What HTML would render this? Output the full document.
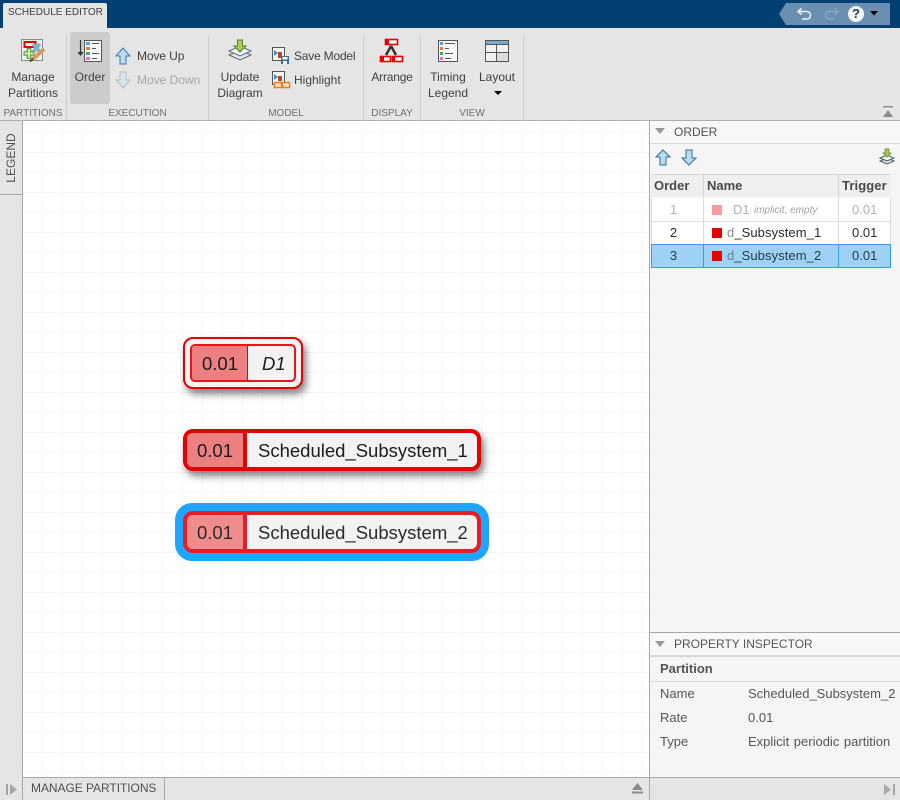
<!DOCTYPE html>
<html>
<head>
<meta charset="utf-8">
<style>
html,body{margin:0;padding:0;width:900px;height:800px;overflow:hidden;background:#fff;font-family:"Liberation Sans",sans-serif;}
.a{position:absolute;white-space:nowrap;}
.t{position:absolute;white-space:nowrap;font-size:12px;line-height:16px;color:#404040;}
.c{text-align:center;}
.g{position:absolute;white-space:nowrap;font-size:10px;line-height:14px;color:#6e6e6e;top:107px;text-align:center;}
.n{position:absolute;white-space:nowrap;font-size:18.5px;line-height:22px;color:#1c1c1c;}
.sep{position:absolute;top:36px;width:1px;height:84px;background:#cbcbcb;}
svg{position:absolute;overflow:visible;}
</style>
</head>
<body>
<!-- title bar -->
<div class="a" style="left:0;top:0;width:900px;height:28px;background:#023f73;"></div>
<div class="a" style="left:3px;top:3px;width:104px;height:25px;background:#e5e5e5;border-radius:2px 2px 0 0;"></div>
<div class="t" style="left:8px;top:5px;font-size:10px;color:#404040;">SCHEDULE EDITOR</div>
<svg style="left:779px;top:3px" width="111" height="22"><path d="M0 11L7 0H111V22H7Z" fill="#6a8fb0"/></svg>
<svg style="left:796px;top:7px" width="20" height="16" fill="none"><path d="M3 4.5H10.5C13 4.5 14.500 6 14.500 8.200C14.500 10.400 13 12 10.500 12H6" stroke="#e8f3fb" stroke-width="1.600"/><path d="M5.500 1.500L2 4.500L5.500 7.500" stroke="#e8f3fb" stroke-width="1.600"/></svg>
<svg style="left:821px;top:7px" width="20" height="16" fill="none"><path d="M16 4.500H8.500C6 4.500 4.500 6 4.500 8.200C4.500 10.400 6 12 8.500 12H13" stroke="#88a6c0" stroke-width="1.600"/><path d="M13.500 1.500L17 4.500L13.500 7.500" stroke="#88a6c0" stroke-width="1.600"/></svg>
<div class="a" style="left:848px;top:6px;width:16px;height:16px;border-radius:50%;background:#f4f6f8;color:#24384c;font:bold 13px/16px 'Liberation Sans',sans-serif;text-align:center;">?</div>
<svg style="left:870px;top:11px" width="9" height="5"><path d="M0 0H8L4 4.500Z" fill="#000"/></svg>

<!-- ribbon -->
<div class="a" style="left:0;top:28px;width:900px;height:92px;background:#e5e5e5;border-bottom:1px solid #aeaeae;"></div>
<div class="sep" style="left:66px"></div>
<div class="sep" style="left:208px"></div>
<div class="sep" style="left:363px"></div>
<div class="sep" style="left:420px"></div>
<div class="sep" style="left:523px"></div>

<div class="a" style="left:70px;top:32px;width:40px;height:72px;background:#cccccc;border-radius:3px;"></div>

<!-- manage partitions icon -->
<svg style="left:20px;top:38px" width="28" height="26" fill="none">
<rect x="1.500" y="1.500" width="21" height="21" fill="#efefef" stroke="#8a8a8a"/>
<rect x="4.500" y="4" width="11" height="5" fill="#fff" stroke="#e60000" stroke-width="2"/>
<path d="M13 6L20 14M20 6L13 14" stroke="#7fb2d6" stroke-width="3.500"/>
<path d="M9 10V21M3.500 15.500H14.500" stroke="#5c9e3c" stroke-width="4.500"/><path d="M9 11V20M4.500 15.500H13.500" stroke="#d7eeb8" stroke-width="2"/>
<path d="M13 21L24 11" stroke="#d49a5a" stroke-width="4"/><path d="M10 23.500L13 20.500" stroke="#444" stroke-width="2"/>
</svg>
<div class="t c" style="left:3px;top:69px;width:60px;">Manage<br>Partitions</div>

<!-- order icon -->
<svg style="left:76px;top:39px" width="28" height="26" fill="none">
<path d="M4.500 1V14" stroke="#333" stroke-width="1.200"/><path d="M1.500 13L4.500 17L7.500 13Z" fill="#333"/>
<rect x="8.500" y="1.500" width="17" height="21" fill="#f8f8f8" stroke="#555"/>
<rect x="10" y="3" width="4" height="3" fill="#4da6e0"/><rect x="10" y="8" width="4" height="3" fill="#e8803a"/><rect x="10" y="13" width="4" height="3" fill="#3cae5c"/><rect x="10" y="18" width="4" height="3" fill="#e070d0"/>
<path d="M16 4.500H23M16 9.500H20M16 14.500H23M16 19.500H21" stroke="#555"/>
</svg>
<div class="t c" style="left:70px;top:69px;width:40px;">Order</div>

<!-- move up / down -->
<svg style="left:115px;top:47px" width="16" height="18"><path d="M8 1L15 9H11V17H5V9H1Z" fill="#bcdcf2" stroke="#3e7ca8"/></svg>
<svg style="left:115px;top:71px" width="16" height="18"><path d="M8 17L15 9H11V1H5V9H1Z" fill="#d8e2ea" stroke="#b4c0c8"/></svg>
<div class="t" style="left:137px;top:48px;letter-spacing:-.1px;">Move Up</div>
<div class="t" style="left:137px;top:72px;color:#a6a6a6;">Move Down</div>

<!-- update diagram -->
<svg style="left:228px;top:40px" width="24" height="22" fill="none">
<path d="M12 10L23 15L12 20L1 15Z" fill="#dfe8ee" stroke="#5a6a74"/>
<path d="M12 6L23 11L12 16L1 11Z" fill="#f0f4f6" stroke="#5a6a74"/>
<path d="M9.500 0H14.500V6H18L12 12L6 6H9.500Z" fill="#a4cc54" stroke="#5c8020"/>
</svg>
<div class="t c" style="left:215px;top:69px;width:50px;">Update<br>Diagram</div>

<!-- save model / highlight -->
<svg style="left:272px;top:47px" width="18" height="18" fill="none">
<rect x=".5" y=".5" width="12" height="13" fill="#f6f6f6" stroke="#555"/><path d="M2 3V9L6 6Z" fill="#3f8fd0"/><rect x="6" y="5" width="4" height="6" fill="#c84028"/>
<rect x="9" y="9" width="8" height="8" fill="#3b6f96"/><rect x="10.500" y="10" width="5" height="2.500" fill="#fff"/><rect x="11" y="14" width="4" height="3" fill="#fff"/>
</svg>
<svg style="left:272px;top:71px" width="18" height="18" fill="none">
<rect x=".5" y=".5" width="12" height="13" fill="#f6f6f6" stroke="#555"/><path d="M2 3V9L6 6Z" fill="#3f8fd0"/><rect x="6" y="5" width="4" height="5" fill="#c84028"/>
<rect x="2.500" y="11.500" width="7" height="5" fill="#fbe0b8" stroke="#e08020" stroke-width="1.500"/><rect x="10.500" y="11.500" width="7" height="5" fill="#fbe0b8" stroke="#e08020" stroke-width="1.500"/>
</svg>
<div class="t" style="left:294px;top:48px;letter-spacing:-.2px;">Save Model</div>
<div class="t" style="left:294px;top:72px;">Highlight</div>

<!-- arrange -->
<svg style="left:379px;top:38px" width="26" height="26" fill="none">
<path d="M12 8L7 17M12 8L17 17" stroke="#333" stroke-width="2.500"/>
<rect x="6.500" y="1.500" width="12" height="5" fill="#fff" stroke="#e60000" stroke-width="1.600"/><rect x="6" y="1" width="4" height="6" fill="#e60000"/>
<rect x="1.500" y="18.500" width="10" height="5" fill="#fff" stroke="#e60000" stroke-width="1.600"/><rect x="1" y="18" width="4" height="6" fill="#e60000"/>
<rect x="13.500" y="18.500" width="10" height="5" fill="#fff" stroke="#e60000" stroke-width="1.600"/><rect x="13" y="18" width="3" height="6" fill="#e60000"/>
</svg>
<div class="t c" style="left:368px;top:69px;width:48px;letter-spacing:-.2px;">Arrange</div>

<!-- timing legend -->
<svg style="left:438px;top:40px" width="20" height="22" fill="none">
<rect x=".5" y=".5" width="19" height="21" fill="#f8f8f8" stroke="#555"/>
<rect x="2" y="2" width="3" height="3" fill="#4da6e0"/><rect x="2" y="7" width="3" height="3" fill="#e8803a"/><rect x="2" y="12" width="3" height="3" fill="#3cae5c"/><rect x="2" y="17" width="3" height="3" fill="#e070d0"/>
<path d="M7 3.500H17M7 8.500H11M7 13.500H15M7 18.500H13" stroke="#555"/>
</svg>
<div class="t c" style="left:422px;top:69px;width:52px;">Timing<br>Legend</div>

<!-- layout -->
<svg style="left:485px;top:40px" width="24" height="22" fill="none">
<rect x=".5" y=".5" width="23" height="21" fill="#f0f0f0" stroke="#555"/>
<rect x="1" y="1" width="22" height="3" fill="#78a8cc"/>
<path d="M0 4.500H24M11.500 4V22M0 12.500H24" stroke="#555"/>
<rect x="12" y="13" width="11" height="8" fill="#dcdcdc"/>
</svg>
<div class="t c" style="left:472px;top:69px;width:50px;">Layout</div>
<svg style="left:494px;top:91px" width="8" height="4"><path d="M0 0H8L4 4Z" fill="#000"/></svg>

<div class="g" style="left:0;width:66px;">PARTITIONS</div>
<div class="g" style="left:67px;width:141px;">EXECUTION</div>
<div class="g" style="left:209px;width:154px;">MODEL</div>
<div class="g" style="left:364px;width:56px;">DISPLAY</div>
<div class="g" style="left:421px;width:102px;">VIEW</div>
<svg style="left:883px;top:106px" width="11" height="11"><rect width="10" height="1.500" fill="#8c8c8c"/><path d="M0 11L5 4L10 11Z" fill="#8c8c8c"/></svg>

<!-- left rail -->
<div class="a" style="left:0;top:121px;width:22px;height:679px;background:#e5e5e5;border-right:1px solid #a8a8a8;"></div>
<div class="a" style="left:0;top:194px;width:22px;height:1px;background:#a8a8a8;"></div>
<div class="a" style="left:-19px;top:150px;width:60px;height:16px;text-align:center;font-size:12px;line-height:16px;color:#505050;transform:rotate(-90deg);">LEGEND</div>

<!-- canvas grid -->
<div class="a" style="left:23px;top:121px;width:626px;height:656px;background-color:#fff;background-image:linear-gradient(to right,#f6f6f6 1px,transparent 1px),linear-gradient(to bottom,#f6f6f6 1px,transparent 1px);background-size:20px 20px;background-position:19px 11px;"></div>

<!-- D1 node -->
<div class="a" style="left:183px;top:337px;width:120px;height:52px;box-sizing:border-box;background:#f2f2f2;border:2px solid #e60000;border-radius:10px;box-shadow:3px 5px 8px rgba(0,0,0,.5);"></div>
<div class="a" style="left:190px;top:344px;width:106px;height:38px;box-sizing:border-box;background:#f2f2f2;border:2px solid #e8141c;border-radius:5px;overflow:hidden;">
  <div class="a" style="left:0;top:0;width:55px;height:34px;background:#ec8080;border-right:1.500px solid #e60000;"></div>
</div>
<div class="n" style="left:202px;top:353px;">0.01</div>
<div class="n" style="left:262px;top:353px;font-style:italic;">D1</div>

<!-- Sub1 node -->
<div class="a" style="left:183px;top:429px;width:298px;height:42px;box-sizing:border-box;background:#f2f2f2;border:4px solid #e60000;border-radius:10px;box-shadow:3px 5px 8px rgba(0,0,0,.5);overflow:hidden;">
  <div class="a" style="left:0;top:0;width:56px;height:34px;background:#ec8080;border-right:4px solid #e60000;"></div>
</div>
<div class="n" style="left:197px;top:440px;">0.01</div>
<div class="n" style="left:258px;top:440px;">Scheduled_Subsystem_1</div>

<!-- Sub2 node -->
<div class="a" style="left:175px;top:503px;width:314px;height:58px;background:#1ea5ff;border-radius:17px;"></div>
<div class="a" style="left:183px;top:511px;width:298px;height:42px;box-sizing:border-box;background:#f2f2f2;border:4px solid #ec1c24;border-radius:10px;overflow:hidden;">
  <div class="a" style="left:0;top:0;width:56px;height:34px;background:#ef8d8d;border-right:4px solid #ec1c24;"></div>
</div>
<div class="n" style="left:197px;top:522px;color:#2a2a2a;">0.01</div>
<div class="n" style="left:258px;top:522px;color:#2a2a2a;">Scheduled_Subsystem_2</div>

<!-- bottom bar -->
<div class="a" style="left:23px;top:777px;width:626px;height:23px;background:#e5e5e5;border-top:1px solid #a8a8a8;box-sizing:border-box;"></div>
<div class="a" style="left:23px;top:778px;width:141px;height:22px;border-right:1px solid #a8a8a8;font-size:12px;line-height:21px;color:#505050;text-indent:8px;letter-spacing:-.05px;">MANAGE PARTITIONS</div>
<svg style="left:6px;top:784px" width="11" height="11"><rect width="2" height="11" fill="#a6a6a6"/><path d="M4 0L11 5.500L4 11Z" fill="#a6a6a6"/></svg>
<svg style="left:632px;top:783px" width="11" height="11"><path d="M0 7L5.500 0L11 7Z" fill="#8c8c8c"/><rect y="8.500" width="11" height="2" fill="#8c8c8c"/></svg>

<!-- right panel -->
<div class="a" style="left:649px;top:121px;width:251px;height:679px;background:#f5f5f5;border-left:1px solid #a8a8a8;box-sizing:border-box;"></div>
<div class="a" style="left:650px;top:121px;width:250px;height:22px;background:#f8f8f8;border-bottom:1px solid #d8d8d8;"></div>
<svg style="left:655px;top:128px" width="10" height="6"><path d="M0 0H10L5 6Z" fill="#999"/></svg>
<div class="t" style="left:674px;top:124px;color:#505050;">ORDER</div>
<svg style="left:655px;top:149px" width="16" height="17"><path d="M8 1L15 8H11V16H5V8H1Z" fill="#bcdcf2" stroke="#2c6c9c"/></svg>
<svg style="left:681px;top:149px" width="16" height="17"><path d="M8 16L15 9H11V1H5V9H1Z" fill="#bcdcf2" stroke="#2c6c9c"/></svg>
<svg style="left:879px;top:149px" width="16" height="17" fill="none"><path d="M8 9L15 12L8 15L1 12Z" fill="#dfe8ee" stroke="#4a5a64"/><path d="M8 6L15 9L8 12L1 9Z" fill="#f0f4f6" stroke="#4a5a64"/><path d="M6 0H10V4H12L8 8L4 4H6Z" fill="#a4cc54" stroke="#5c8020" stroke-width=".7"/></svg>

<!-- table -->
<div class="a" style="left:651px;top:174px;width:240px;height:23px;background:#efefef;border-top:1px solid #d8d8d8;box-sizing:border-box;"></div>
<div class="a" style="left:703px;top:175px;width:1px;height:22px;background:#d4d4d4;"></div>
<div class="a" style="left:838px;top:175px;width:1px;height:22px;background:#d4d4d4;"></div>
<div class="t" style="left:654px;top:178px;font-size:13px;font-weight:bold;color:#4a4a4a;">Order</div>
<div class="t" style="left:707px;top:178px;font-size:13px;font-weight:bold;color:#4a4a4a;">Name</div>
<div class="t" style="left:842px;top:178px;font-size:13px;font-weight:bold;color:#4a4a4a;letter-spacing:.1px;">Trigger</div>

<div class="a" style="left:651px;top:198px;width:240px;height:46px;background:#fff;"></div>
<div class="a" style="left:651px;top:221px;width:240px;height:1px;background:#e0e0e0;"></div>
<div class="a" style="left:703px;top:198px;width:1px;height:46px;background:#dcdcdc;"></div>
<div class="a" style="left:838px;top:198px;width:1px;height:46px;background:#dcdcdc;"></div>
<div class="a" style="left:890px;top:198px;width:1px;height:46px;background:#dcdcdc;"></div>
<div class="a" style="left:651px;top:198px;width:1px;height:46px;background:#dcdcdc;"></div>

<div class="a" style="left:651px;top:244px;width:240px;height:24px;background:#9dd2f5;border:1px solid #2e9ef0;box-sizing:border-box;"></div>
<div class="a" style="left:703px;top:244px;width:1px;height:24px;background:#2e9ef0;"></div>
<div class="a" style="left:838px;top:244px;width:1px;height:24px;background:#2e9ef0;"></div>

<div class="a" style="left:712px;top:205px;width:10px;height:10px;background:#f59c9c;"></div>
<div class="a" style="left:712px;top:228px;width:10px;height:10px;background:#e60000;"></div>
<div class="a" style="left:712px;top:251px;width:10px;height:10px;background:#e60000;"></div>

<div class="t c" style="left:652px;top:202px;width:43px;font-size:13px;color:#b0b0b0;">1</div>
<div class="t" style="left:733px;top:202px;font-size:13px;color:#b0b0b0;">D1</div>
<div class="t" style="left:754px;top:203px;font-size:10px;font-style:italic;color:#a0a0a0;">implicit, empty</div>
<div class="t" style="left:852px;top:202px;font-size:13px;color:#b0b0b0;">0.01</div>
<div class="t c" style="left:652px;top:225px;width:43px;font-size:13px;color:#2a2a2a;">2</div>
<div class="t" style="left:727px;top:225px;font-size:13px;color:#2a2a2a;letter-spacing:.08px;"><span style="color:#8a8a8a">d</span>_Subsystem_1</div>
<div class="t" style="left:852px;top:225px;font-size:13px;color:#2a2a2a;">0.01</div>
<div class="t c" style="left:652px;top:248px;width:43px;font-size:13px;color:#2a3a48;">3</div>
<div class="t" style="left:727px;top:248px;font-size:13px;color:#2a3a48;letter-spacing:.08px;"><span style="color:#66808f">d</span>_Subsystem_2</div>
<div class="t" style="left:852px;top:248px;font-size:13px;color:#2a3a48;">0.01</div>

<!-- property inspector -->
<div class="a" style="left:650px;top:632px;width:250px;height:1px;background:#a8a8a8;"></div>
<div class="a" style="left:650px;top:633px;width:250px;height:22px;background:#f8f8f8;border-bottom:2px solid #d8d8d8;"></div>
<svg style="left:655px;top:641px" width="10" height="6"><path d="M0 0H10L5 6Z" fill="#999"/></svg>
<div class="t" style="left:674px;top:636px;color:#555;">PROPERTY INSPECTOR</div>
<div class="t" style="left:660px;top:661px;font-size:13px;font-weight:bold;color:#555;">Partition</div>
<div class="a" style="left:650px;top:681px;width:250px;height:1px;background:#d8d8d8;"></div>
<div class="t" style="left:660px;top:686px;font-size:13px;color:#555;">Name</div>
<div class="t" style="left:748px;top:686px;font-size:13px;color:#555;">Scheduled_Subsystem_2</div>
<div class="t" style="left:660px;top:710px;font-size:13px;color:#555;">Rate</div>
<div class="t" style="left:748px;top:710px;font-size:13px;color:#555;">0.01</div>
<div class="t" style="left:660px;top:734px;font-size:13px;color:#555;">Type</div>
<div class="t" style="left:748px;top:734px;font-size:13px;color:#555;word-spacing:1px;">Explicit periodic partition</div>
<div class="a" style="left:650px;top:777px;width:250px;height:23px;background:#e5e5e5;border-top:1px solid #a8a8a8;box-sizing:border-box;"></div>
<svg style="left:884px;top:784px" width="11" height="11"><path d="M0 0L7 5.500L0 11Z" fill="#a6a6a6"/><rect x="9" width="2" height="11" fill="#a6a6a6"/></svg>
</body>
</html>
